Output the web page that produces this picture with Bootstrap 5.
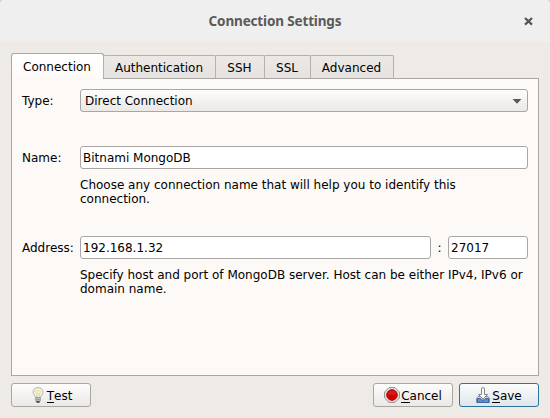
<!DOCTYPE html>
<html lang="en">
<head>
<meta charset="utf-8">
<meta name="viewport" content="width=device-width, initial-scale=1">
<title>Connection Settings</title>
<link href="https://cdn.jsdelivr.net/npm/bootstrap@5.3.0/dist/css/bootstrap.min.css" rel="stylesheet">
<style>
html{background:#ccc;overflow:hidden}
body{width:550px;height:418px;background:#eeebe7;border-radius:4px 4px 0 0;overflow:hidden;font:12px/14px "DejaVu Sans",sans-serif;color:#000}
.titlebar{height:42px;background:#efefef;color:#5a5a58;font:bold 13.5px/20px "Noto Sans","Open Sans",sans-serif}
.title-text{letter-spacing:-.15px}
.close-btn{right:17px;top:17px;width:9px;height:9px;line-height:0}
.window-body{padding:11px 11px 0}
.tabs{height:26px;margin-bottom:-1px;z-index:1}
.tabs .nav-link{height:24px;padding:5px 1px 0 0;margin-left:-1px;border:1px solid #b3b0ad;border-bottom-color:#a9a6a3;border-radius:2px 2px 0 0;background:linear-gradient(#ebe8e5,#e5e2df);color:#000;text-align:center;line-height:14px}
.tabs .nav-link.active{height:26px;margin-left:0;border-color:#a9a6a3;border-bottom:0;border-radius:3px 3px 0 0;background:linear-gradient(#fff,#fdf9f6);padding-top:6px}
.w-conn{width:93px}.w-auth{width:113px}.w-ssh{width:50px}.w-ssl{width:47px}.w-adv{width:84px}
.pane{height:298px;background:#fdf9f6;border:1px solid #a9a6a3;padding:10px}
.label-col{width:58px;flex:none}
.pane .form-control{height:23px;min-height:0;padding:0 2px;border:1px solid #a9a6a3;border-radius:3px;font-size:12px;line-height:21px;color:#000;background-color:#fff}
.pane .combo{padding:1px 5px 0 4px;background:linear-gradient(#fdfdfc,#ebe8e6)}
.port{width:80px;flex:none}
.colon{width:17px;text-align:center}
.hint{margin:9px 0 0 58px}
.gap-name{margin-top:34px}
.gap-addr{margin-top:30px}
.footer-row{padding-top:7px}
.dlg-btn{width:80px;height:24px;padding:0;border:1px solid #a9a6a3;border-radius:3px;background:linear-gradient(#fdfdfc,#ebe8e6);font-size:12px;line-height:14px;color:#000}
.dlg-btn.cancel{margin-right:6px}
.dlg-btn.primary{padding-right:1px;border-color:#2c7299;background:linear-gradient(#fbfcfc,#dfe6e9)}
.dlg-btn svg{width:16px;height:16px;flex:none;margin-right:1px}
.dlg-btn .caption{margin-top:1px}
.key{box-shadow:0 1px #000;display:inline-block;height:13px;vertical-align:top}
</style>
</head>
<body>
<header class="titlebar position-relative d-flex align-items-center justify-content-center">
  <span class="title-text">Connection Settings</span>
  <span class="close-btn position-absolute"><svg width="9" height="9" viewBox="0 0 9 9"><path d="M1 1 8 7.600M8 1 1 7.600" stroke="#555552" stroke-width="2.200"/></svg></span>
</header>
<main class="window-body">
  <nav class="tabs nav d-flex align-items-end flex-nowrap position-relative">
    <a class="nav-link active w-conn">Connection</a>
    <a class="nav-link w-auth">Authentication</a>
    <a class="nav-link w-ssh">SSH</a>
    <a class="nav-link w-ssl">SSL</a>
    <a class="nav-link w-adv">Advanced</a>
  </nav>
  <section class="pane">
    <div class="d-flex align-items-center">
      <span class="label-col">Type:</span>
      <div class="form-control combo d-flex align-items-center justify-content-between"><span>Direct Connection</span><svg width="10" height="5" viewBox="0 0 10 5"><path d="M.5 0h9L5 4.700z" fill="#5c5a58"/></svg></div>
    </div>
    <div class="d-flex align-items-center gap-name">
      <label class="label-col" for="name">Name:</label>
      <input class="form-control" id="name" value="Bitnami MongoDB">
    </div>
    <p class="hint">Choose any connection name that will help you to identify this<br>connection.</p>
    <div class="d-flex align-items-center gap-addr">
      <label class="label-col" for="host">Address:</label>
      <input class="form-control" id="host" value="192.168.1.32">
      <span class="colon flex-shrink-0">:</span>
      <input class="form-control port" value="27017">
    </div>
    <p class="hint">Specify host and port of MongoDB server. Host can be either IPv4, IPv6 or<br>domain name.</p>
  </section>
  <footer class="footer-row d-flex">
    <button class="btn dlg-btn me-auto d-flex align-items-center justify-content-center">
      <svg viewBox="0 0 16 16"><path d="M8 .6C4.900.6 3 2.700 3 5.200c0 2.300 2.200 3.300 2.600 5.500h4.800C10.800 8.500 13 7.500 13 5.200 13 2.700 11.100.6 8 .6z" fill="#f1f0e4" stroke="#b0b0a9" stroke-width=".9"/><path d="M4.800 4.500Q8 3 11.200 4.500L9.200 6.700 8 5.500 6.800 6.700z" fill="#fff6a0" stroke="#e9df8c" stroke-width=".8"/><path d="M6.800 6.500v4M9.200 6.500v4" stroke="#c5c3b5" stroke-width=".7"/><path d="M5.200 10.300h5.600v3.500L9.500 15.500h-3l-1.300-1.700z" fill="#8f938e"/><path d="M5.500 11.600h5M5.500 13.300h5" stroke="#d4d6d2" stroke-width=".7"/><path d="M6.500 14.200h3v1.500h-3z" fill="#3a3e3a"/></svg>
      <span class="caption"><span class="key">T</span>est</span>
    </button>
    <button class="btn dlg-btn cancel d-flex align-items-center justify-content-center">
      <svg viewBox="0 0 16 16"><path d="M5 .7h6L15.300 5v6L11 15.300H5L.7 11V5z" fill="#eeeeec" stroke="#858783"/><circle cx="8" cy="8" r="5.400" fill="#cf0000" stroke="#a80000" stroke-width=".8"/><path d="M3.500 8a4.500 4.500 0 0 1 9 0Q8 6.800 3.500 8z" fill="#df2929" opacity=".6"/></svg>
      <span class="caption"><span class="key">C</span>ancel</span>
    </button>
    <button class="btn dlg-btn primary d-flex align-items-center justify-content-center">
      <svg viewBox="0 0 16 16"><path d="M3 9.500h10l1.500 2v4h-13v-4z" fill="#d4dae2" stroke="#7c8494" stroke-width=".9"/><path d="M2.500 11.500h3l1 1.500h3l1-1.500h3v4h-11z" fill="#5e8fd0" stroke="#365f9f" stroke-width=".9"/><path d="M6.500 2Q6.500.6 8 .6T9.500 2v5.500h3L8 12 3.500 7.500h3z" fill="#fafafa" stroke="#84868a" stroke-width="1"/></svg>
      <span class="caption"><span class="key">S</span>ave</span>
    </button>
  </footer>
</main>
<script src="https://cdn.jsdelivr.net/npm/bootstrap@5.3.0/dist/js/bootstrap.bundle.min.js"></script>
</body>
</html>
